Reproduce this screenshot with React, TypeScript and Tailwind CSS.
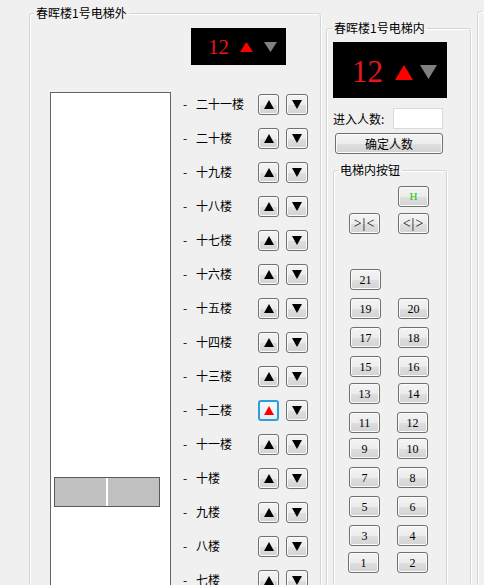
import React from 'react';
import clsx from 'clsx';

const cjk = "font-['Noto_Sans_CJK_SC','Noto_Sans',sans-serif]";
const serif = "font-['Liberation_Serif','DejaVu_Serif',serif]";

// only the floors that fit in the window are listed
const floors = [
  '二十一楼', '二十楼', '十九楼', '十八楼', '十七楼', '十六楼', '十五楼',
  '十四楼', '十三楼', '十二楼', '十一楼', '十楼', '九楼', '八楼', '七楼',
];

function Tri({ up, w, h, color }: { up?: boolean; w: number; h: number; color: string }) {
  return (
    <svg width={w} height={h} viewBox={`0 0 ${w} ${h}`} className="block">
      {up ? (
        <polygon points={`${w / 2},0 ${w},${h} 0,${h}`} fill={color} />
      ) : (
        <polygon points={`0,0 ${w},0 ${w / 2},${h}`} fill={color} />
      )}
    </svg>
  );
}

function Btn({ className, children }: { className?: string; children?: React.ReactNode }) {
  return (
    <div
      className={clsx(
        'flex items-center justify-center border border-[#707070] rounded-[3px] shrink-0 bg-[linear-gradient(180deg,#f4f4f4_0%,#ececec_50%,#dfdfdf_51%,#d3d3d3_100%)] shadow-[inset_0_0_0_1px_#fbfbfb]',
        className
      )}
    >
      {children}
    </div>
  );
}

// inner elevator buttons, rows placed as in the form designer
const cabRows: { mt: string; left?: [string, string]; right?: [string, string] }[] = [
  { mt: 'mt-[9px]', right: ['H', 'ml-[64px]'] },
  { mt: 'mt-[6px]', left: ['>|<', 'ml-[15px]'], right: ['<|>', 'ml-[18px]'] },
  { mt: 'mt-[35px]', left: ['21', 'ml-[16px]'] },
  { mt: 'mt-[8px]', left: ['19', 'ml-[16px]'], right: ['20', 'ml-[17px]'] },
  { mt: 'mt-[8px]', left: ['17', 'ml-[16px]'], right: ['18', 'ml-[17px]'] },
  { mt: 'mt-[8px]', left: ['15', 'ml-[16px]'], right: ['16', 'ml-[17px]'] },
  { mt: 'mt-[6px]', left: ['13', 'ml-[15px]'], right: ['14', 'ml-[18px]'] },
  { mt: 'mt-[8px]', left: ['11', 'ml-[15px]'], right: ['12', 'ml-[17px]'] },
  { mt: 'mt-[5px]', left: ['9', 'ml-[15px]'], right: ['10', 'ml-[17px]'] },
  { mt: 'mt-[8px]', left: ['7', 'ml-[15px]'], right: ['8', 'ml-[17px]'] },
  { mt: 'mt-[8px]', left: ['5', 'ml-[15px]'], right: ['6', 'ml-[17px]'] },
  { mt: 'mt-[8px]', left: ['3', 'ml-[15px]'], right: ['4', 'ml-[17px]'] },
  { mt: 'mt-[6px]', left: ['1', 'ml-[14px]'], right: ['2', 'ml-[18px]'] },
];

function CabBtn({ label, className }: { label: string; className: string }) {
  const size =
    label === 'H'
      ? 'text-[11px] text-[#14c814]'
      : label.length === 3
        ? 'text-[14px] tracking-[1px] text-black'
        : 'text-[12px] text-black';
  return (
    <Btn className={clsx('w-[31px] h-[21px] leading-none', serif, className, size)}>
      {label}
    </Btn>
  );
}

const groupBox = 'border border-[#d5d5d5] rounded-[3px] shadow-[inset_1px_1px_0_#fff,1px_1px_0_#fff] shrink-0';

export default function App() {
  return (
    <div className={clsx('w-[484px] h-[585px] overflow-hidden bg-[#f0f0f0] flex items-start text-black', cjk)}>
      {/* outside the elevator */}
      <fieldset className={clsx('ml-[29px] mt-[6px] w-[292px] h-[640px]', groupBox)}>
        <legend className="ml-[4px] px-[2px] text-[12px] leading-[14px]">春晖楼1号电梯外</legend>
        <div className="flex items-start">
          <div className="ml-[20px] mt-[72px] w-[121px] h-[560px] bg-white border border-[#646464] shrink-0">
            <div className="ml-[3px] mt-[384px] w-[106px] h-[30px] bg-[#c0c0c0] border border-[#5a5a5a] flex">
              <div className="w-[51px]" />
              <div className="w-[2px] bg-white" />
            </div>
          </div>
          <div className="ml-[12px] flex flex-col">
            <div className="ml-[8px] mt-[8px] w-[95px] h-[37px] bg-black flex items-center pl-[17px]">
              <span className={clsx('text-[21px] leading-none text-[#e8141e] mt-[1px]', serif)}>12</span>
              <div className="ml-[11px]"><Tri up w={13} h={10} color="#ff0000" /></div>
              <div className="ml-[11px]"><Tri w={13} h={10} color="#808080" /></div>
            </div>
            <div className="mt-[22px] flex flex-col">
              {floors.map((f, i) => (
                <div key={f} className="h-[34px] flex items-center">
                  <div className="w-[75px] flex text-[12px] leading-none">
                    <span className="w-[13px]">-</span>
                    <span>{f}</span>
                  </div>
                  {i === 9 ? (
                    <div className="w-[21px] h-[21px] rounded-[3px] border-2 border-[#2c9fd8] bg-[linear-gradient(180deg,#f4f9fc,#e3eef6)] flex items-center justify-center shrink-0">
                      <Tri up w={10} h={9} color="#ff0000" />
                    </div>
                  ) : (
                    <Btn className="w-[21px] h-[21px]">
                      <Tri up w={10} h={9} color="#000" />
                    </Btn>
                  )}
                  <Btn className="ml-[7px] w-[22px] h-[21px]">
                    <Tri w={10} h={9} color="#000" />
                  </Btn>
                </div>
              ))}
            </div>
          </div>
        </div>
      </fieldset>

      {/* inside the elevator */}
      <fieldset className={clsx('ml-[5px] mt-[21px] w-[145px] h-[600px]', groupBox)}>
        <legend className="ml-[5px] px-[2px] text-[12px] leading-[14px]">春晖楼1号电梯内</legend>
        <div className="flex flex-col">
          <div className="ml-[6px] mt-[7px] w-[114px] h-[56px] bg-black flex items-center pl-[19px]">
            <span className={clsx('text-[31px] leading-none text-[#e8141e] mt-[2px]', serif)}>12</span>
            <div className="ml-[12px] mt-[4px]"><Tri up w={18} h={15} color="#ff0000" /></div>
            <div className="ml-[7px] mt-[3px]"><Tri w={17} h={14} color="#808080" /></div>
          </div>
          <div className="mt-[10px] flex items-center">
            <span className="ml-[6px] w-[60px] text-[12px] leading-none">进入人数:</span>
            <div className="w-[50px] h-[21px] bg-white border border-[#dadada]" />
          </div>
          <Btn className="ml-[8px] mt-[4px] w-[108px] h-[21px] text-[12px] leading-none">确定人数</Btn>

          <fieldset className={clsx('ml-[6px] mt-[9px] w-[114px] h-[500px]', groupBox)}>
            <legend className="ml-[4px] px-[2px] text-[12px] leading-[14px]">电梯内按钮</legend>
            <div className="flex flex-col">
              {cabRows.map((r, i) => (
                <div key={i} className={clsx('flex', r.mt)}>
                  {r.left && <CabBtn label={r.left[0]} className={r.left[1]} />}
                  {r.right && <CabBtn label={r.right[0]} className={r.right[1]} />}
                </div>
              ))}
            </div>
          </fieldset>
        </div>
      </fieldset>

      {/* edge of the next panel */}
      <fieldset className={clsx('ml-[6px] mt-[4px] w-[100px] h-[640px]', groupBox)}>
        <legend className="ml-[4px] px-[2px] text-[12px] leading-[14px]">&nbsp;</legend>
      </fieldset>
    </div>
  );
}
